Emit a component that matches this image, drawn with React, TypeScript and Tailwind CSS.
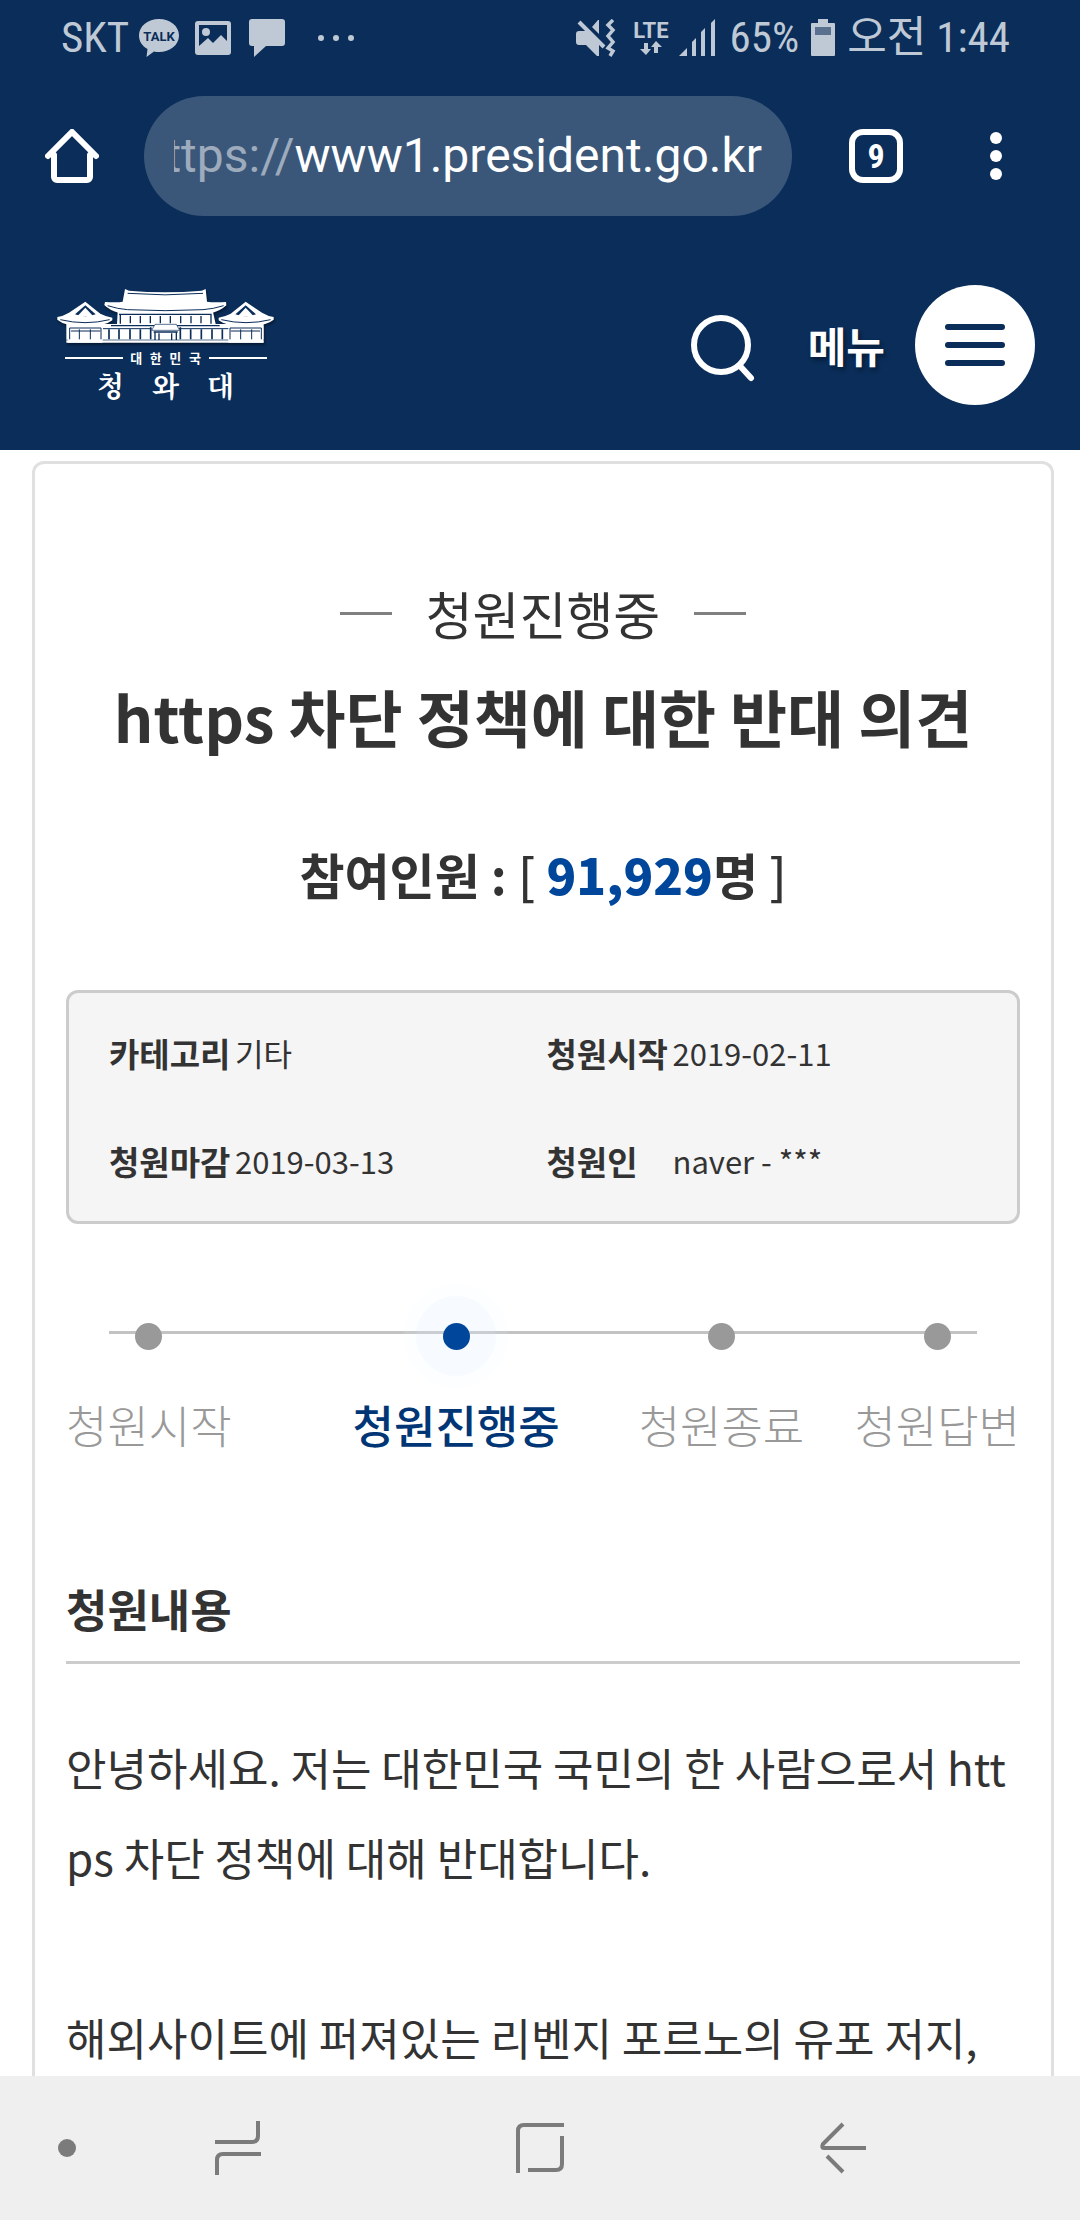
import React from 'react'

const info = [
  { label: '카테고리', value: '기타' },
  { label: '청원시작', value: '2019-02-11' },
  { label: '청원마감', value: '2019-03-13' },
  { label: '청원인', value: 'naver - ***' },
]

const steps = [
  { label: '청원시작', className: '' },
  { label: '청원진행중', className: 'ml-[121px]', active: true },
  { label: '청원종료', className: 'ml-[79px]' },
  { label: '청원답변', className: 'ml-auto' },
]

const StatusBar = () => (
  <div className="flex items-center justify-between h-[75px] pl-[61px] pr-[70px] text-[#bfc9d5] text-[43px] leading-none font-['Roboto_Condensed','Liberation_Sans_Narrow','Noto_Sans_CJK_KR',sans-serif]">
    <div className="flex items-center">
      <span>SKT</span>
      <svg className="ml-[10px]" width="40" height="40" viewBox="0 0 40 40">
        <path
          d="M20 1c11 0 20 7 20 16.500S31 34 20 34c-2 0-3.500-.2-5-.6L7.500 39l1-8C3 28 0 23 0 17.500 0 8 9 1 20 1z"
          fill="currentColor"
        />
        <text
          x="20"
          y="22.500"
          textAnchor="middle"
          fontSize="13"
          fontWeight="bold"
          fontFamily="Roboto"
          fill="#0a2d59"
        >
          TALK
        </text>
      </svg>
      <svg className="ml-[16px]" width="36" height="36" viewBox="0 0 36 36">
        <path
          fillRule="evenodd"
          d="M3 1h30a3 3 0 0 1 3 3v28a3 3 0 0 1-3 3H3a3 3 0 0 1-3-3V4a3 3 0 0 1 3-3zm1 4v21l9-8 5 5 8-8 6 6V5z"
          fill="currentColor"
        />
        <circle cx="11" cy="12" r="4" fill="currentColor" />
      </svg>
      <svg className="ml-[18px]" width="36" height="39" viewBox="0 0 36 39">
        <path
          d="M3 1h30a3 3 0 0 1 3 3v21a3 3 0 0 1-3 3H17L5 39V28H3a3 3 0 0 1-3-3V4a3 3 0 0 1 3-3z"
          fill="currentColor"
        />
      </svg>
      <svg className="ml-[32px]" width="38" height="8" viewBox="0 0 38 8">
        <circle cx="4" cy="4" r="3" fill="currentColor" />
        <circle cx="19" cy="4" r="3" fill="currentColor" />
        <circle cx="34" cy="4" r="3" fill="currentColor" />
      </svg>
    </div>
    <div className="flex items-center">
      <svg width="40" height="38" viewBox="0 0 40 38">
        <path
          d="M0 15a3 3 0 0 1 3-3h7l13 13v12h-2L10 26H3a3 3 0 0 1-3-3zM23 1v14l-7-7 6-7z"
          fill="currentColor"
        />
        <path d="M3 3l25 25" stroke="currentColor" strokeWidth="4" />
        <path
          d="M37 1l-5 5 5 5-5 6 5 6-5 6 5 3-3 5"
          fill="none"
          stroke="currentColor"
          strokeWidth="3.500"
        />
      </svg>
      <div className="flex flex-col items-center ml-[17px]">
        <span className="text-[22px] leading-[20px] font-bold font-['Roboto',sans-serif]">
          LTE
        </span>
        <svg width="22" height="14" viewBox="0 0 22 14">
          <path
            d="M4 2h4v6h3l-5 6-6-6h4zM14 12h4V6h4l-6-6-5 6h3z"
            fill="currentColor"
          />
        </svg>
      </div>
      <svg className="ml-[10px]" width="36" height="38" viewBox="0 0 36 38">
        <path
          d="M0 37h8v-8zM13 37h4V19l-4 4zM22 37h4V9l-4 4zM32 37h4V0l-4 4z"
          fill="currentColor"
        />
      </svg>
      <span className="ml-[15px]">65%</span>
      <svg className="ml-[12px]" width="24" height="37" viewBox="0 0 24 37">
        <path
          d="M7 0h10v4h6a1 1 0 0 1 1 1v31a1 1 0 0 1-1 1H1a1 1 0 0 1-1-1V5a1 1 0 0 1 1-1h6z"
          fill="currentColor"
        />
        <path d="M4 8h16v8H4z" fill="#5a708f" />
      </svg>
      <span className="ml-[12px]">오전 1:44</span>
    </div>
  </div>
)

const BrowserBar = () => (
  <div className="flex items-center h-[162px] pl-[45px] pr-[78px] text-white">
    <button type="button" aria-label="홈" className="shrink-0">
      <svg width="54" height="54" viewBox="0 0 54 54">
        <path
          d="M3 27L27 3l24 24M9 26v22a3 3 0 0 0 3 3h30a3 3 0 0 0 3-3V26"
          fill="none"
          stroke="currentColor"
          strokeWidth="6"
          strokeLinecap="round"
        />
      </svg>
    </button>
    <div className="flex items-center flex-1 min-w-0 h-[120px] ml-[45px] px-[30px] rounded-full bg-[#3a577a]">
      <div className="flex justify-end w-full overflow-hidden text-[48px] leading-[60px] whitespace-nowrap font-['Roboto',sans-serif]">
        <span className="text-[#9dabbd]">https://</span>
        <span>www1.president.go.kr</span>
      </div>
    </div>
    <button
      type="button"
      className="flex items-center justify-center shrink-0 w-[54px] h-[54px] ml-[57px] border-6 rounded-[14px] text-[34px] leading-none font-bold font-['Roboto_Condensed','Liberation_Sans_Narrow',sans-serif]"
    >
      9
    </button>
    <button type="button" aria-label="더보기" className="shrink-0 ml-[87px]">
      <svg width="12" height="48" viewBox="0 0 12 48">
        <circle cx="6" cy="6" r="6" fill="currentColor" />
        <circle cx="6" cy="24" r="6" fill="currentColor" />
        <circle cx="6" cy="42" r="6" fill="currentColor" />
      </svg>
    </button>
  </div>
)

const SideHall = () => (
  <g>
    <path d="M165 95l45 36q20 10 36 12v8q-22 18-82 18t-83-20v-8q18-3 35-13z" fill="#fff" />
    <path d="M165 106l31 27q-31 12-62 0z" fill="#0a2d59" />
    <path d="M165 113l24 26h-48z" fill="#fff" />
    <path d="M90 149q74 18 148 0" fill="none" stroke="#0a2d59" strokeWidth="3" />
    <path d="M112 168h105v50H112z" fill="#fff" />
    <path
      d="M118 174h94M122 183h88M118 174v34M147 178v30M180 178v30M212 174v34"
      stroke="#0a2d59"
      strokeWidth="3"
    />
  </g>
)

const Logo = () => (
  <a href="#" className="flex flex-col items-center w-[217px] text-white">
    <svg
      width="217"
      height="56"
      viewBox="80 54 651 168"
      className="drop-shadow-[1px_2px_1px_rgba(0,0,0,0.4)]"
    >
      <path
        d="M284 57l12 5q108 10 218 0l12-5 4 38q18 3 57 1l1 10q-17 16-43 23H267q-30-8-45-24l2-9q40 2 53-1z"
        fill="#fff"
      />
      <path d="M292 70q112 9 226 0" fill="none" stroke="#0a2d59" strokeWidth="3" />
      <path
        d="M232 107q30 10 60 12 112 6 226 0 30-2 62-12"
        fill="none"
        stroke="#0a2d59"
        strokeWidth="3"
      />
      <path d="M262 126h286l8 36h144v56H108v-56h152z" fill="#fff" />
      <path d="M266 133h278M242 167h326" stroke="#0a2d59" strokeWidth="4" />
      <path
        d="M270 135v26M300 138v22M330 138v22M360 138v22M390 138v22M420 138v22M451 138v22M482 138v22M512 138v22M542 135v26"
        stroke="#0a2d59"
        strokeWidth="4"
      />
      <path d="M218 176h146M446 176h150" stroke="#0a2d59" strokeWidth="3" />
      <path
        d="M236 178v30M266 178v30M299 178v30M330 178v30M361 172v36M450 172v36M481 178v30M513 178v30M545 178v30M576 178v30"
        stroke="#0a2d59"
        strokeWidth="5"
      />
      <path d="M374 163h64l10 18h-84z" fill="#fff" stroke="#0a2d59" strokeWidth="2" />
      <path
        d="M370 186h72M374 186v24M386 190v20M424 190v20M438 186v24"
        stroke="#0a2d59"
        strokeWidth="4"
      />
      <path d="M108 210h594" stroke="#0a2d59" strokeWidth="2" />
      <SideHall />
      <g transform="translate(811 0) scale(-1 1)">
        <SideHall />
      </g>
    </svg>
    <div className="flex items-center justify-between w-[202px] mt-[4px] text-[13px] leading-[20px] font-bold">
      <span className="w-[58px] h-[2px] bg-white" />
      <span>대</span>
      <span>한</span>
      <span>민</span>
      <span>국</span>
      <span className="w-[58px] h-[2px] bg-white" />
    </div>
    <div className="flex justify-between w-[137px] text-[28px] leading-[34px] font-bold font-['Noto_Serif_CJK_KR','Noto_Sans_CJK_KR',serif]">
      <span>청</span>
      <span>와</span>
      <span>대</span>
    </div>
  </a>
)

const SiteHeader = () => (
  <header className="flex items-center justify-between h-[213px] pt-[3px] pl-[57px] pr-[45px] text-white">
    <Logo />
    <div className="flex items-center">
      <button type="button" aria-label="검색">
        <svg width="66" height="76" viewBox="0 0 66 76">
          <circle cx="30" cy="38" r="27" fill="none" stroke="currentColor" strokeWidth="6" />
          <path
            d="M49 59l11 12"
            stroke="currentColor"
            strokeWidth="6"
            strokeLinecap="round"
          />
        </svg>
      </button>
      <button type="button" className="flex items-center ml-[51px]">
        <span className="text-[42px] leading-[60px] font-bold text-shadow-[2px_3px_4px_rgb(0_0_0/0.4)]">
          메뉴
        </span>
        <span className="flex flex-col items-center justify-center w-[120px] h-[120px] ml-[30px] gap-3 rounded-full bg-white">
          <span className="w-[60px] h-[6px] rounded-full bg-[#0a2d59]" />
          <span className="w-[60px] h-[6px] rounded-full bg-[#0a2d59]" />
          <span className="w-[60px] h-[6px] rounded-full bg-[#0a2d59]" />
        </span>
      </button>
    </div>
  </header>
)

const Steps = () => (
  <div className="relative mt-[93px]">
    <div className="absolute top-[14px] left-[43px] right-[43px] h-[3px] bg-[#c3c3c3]" />
    <ol className="relative flex text-[45px] leading-[66px]">
      {steps.map((step) => (
        <li
          key={step.label}
          className={`flex flex-col items-center ${step.className} ${
            step.active
              ? 'font-medium text-[#003675]'
              : 'font-light text-[#999]'
          }`}
        >
          <span className="relative flex items-center justify-center h-[38px]">
            {step.active && (
              <span className="absolute w-[80px] h-[80px] rounded-full bg-[#dff1ff]/25 ring-12 ring-[#dff1ff]/10" />
            )}
            <span
              className={`relative w-[27px] h-[27px] rounded-full ${
                step.active ? 'bg-[#00479b]' : 'bg-[#999]'
              }`}
            />
          </span>
          <span className="mt-[37px]">{step.label}</span>
        </li>
      ))}
    </ol>
  </div>
)

const Petition = () => (
  <article className="min-h-full px-[31px] pt-[112px] border-3 border-b-0 border-[#e0e0e0] rounded-t-xl text-[#333]">
    <div className="flex items-center justify-center gap-[34px] text-[51px] leading-[74px]">
      <span className="w-[52px] h-[3px] bg-[#808080]" />
      <span>청원진행중</span>
      <span className="w-[52px] h-[3px] bg-[#808080]" />
    </div>
    <h1 className="mt-[20px] text-center text-[62px] leading-[92px] font-bold">
      https 차단 정책에 대한 반대 의견
    </h1>
    <h2 className="mt-[75px] text-center text-[49px] leading-[74px] font-bold">
      참여인원 : <span className="font-medium">[</span>{' '}
      <strong className="text-[#00479b]">91,929</strong>명{' '}
      <span className="font-medium">]</span>
    </h2>
    <dl className="grid grid-cols-[437fr_430fr] gap-y-[60px] mt-[79px] px-[40px] py-[36px] border-3 border-[#ccc] rounded-xl bg-[#f5f5f5] text-[33px] leading-[48px]">
      {info.map(({ label, value }) => (
        <div key={label} className="flex">
          <dt className="w-[126px] font-bold">{label}</dt>
          <dd className="text-[31px]">{value}</dd>
        </div>
      ))}
    </dl>
    <Steps />
    <h3 className="mt-[118px] pb-[19px] border-b-3 border-[#ccc] text-[45px] leading-[66px] font-bold">
      청원내용
    </h3>
    <div className="mt-[58px] text-[44px] leading-[90px] break-all">
      <p>안녕하세요. 저는 대한민국 국민의 한 사람으로서 https 차단 정책에 대해 반대합니다.</p>
      <p className="mt-[90px]">해외사이트에 퍼져있는 리벤지 포르노의 유포 저지,</p>
    </div>
  </article>
)

const NavBar = () => (
  <nav className="relative flex items-center h-[144px] shrink-0 bg-[#efefef] text-[#7b7b7b]">
    <span className="w-[18px] h-[18px] ml-[58px] rounded-full bg-[#7b7b7b]" />
    <button type="button" aria-label="최근 앱" className="ml-[138px]">
      <svg width="48" height="54" viewBox="0 0 48 54">
        <path
          d="M1 21h37q6 0 6-6V0M47 33H9q-6 0-6 6v15"
          fill="none"
          stroke="currentColor"
          strokeWidth="4"
        />
      </svg>
    </button>
    <button type="button" aria-label="홈 화면" className="ml-[253px]">
      <svg width="50" height="52" viewBox="0 0 50 52">
        <path
          d="M3 51V9q0-6 6-6h40M47 14v28q0 6-6 6H13"
          fill="none"
          stroke="currentColor"
          strokeWidth="4"
        />
      </svg>
    </button>
    <button type="button" aria-label="뒤로" className="ml-[254px]">
      <svg width="48" height="54" viewBox="0 0 48 54">
        <path
          d="M24 3L4 23q-2 4 1 4h42M8 35l16 16"
          fill="none"
          stroke="currentColor"
          strokeWidth="4"
        />
      </svg>
    </button>
  </nav>
)

export default function App() {
  return (
    <div className="flex flex-col h-screen bg-white font-['Noto_Sans_CJK_KR',sans-serif]">
      <div className="shrink-0 bg-[#0a2d59]">
        <StatusBar />
        <BrowserBar />
        <SiteHeader />
      </div>
      <main className="flex-1 min-h-0 pt-[11px] pl-[32px] pr-[26px] overflow-hidden">
        <Petition />
      </main>
      <NavBar />
    </div>
  )
}
